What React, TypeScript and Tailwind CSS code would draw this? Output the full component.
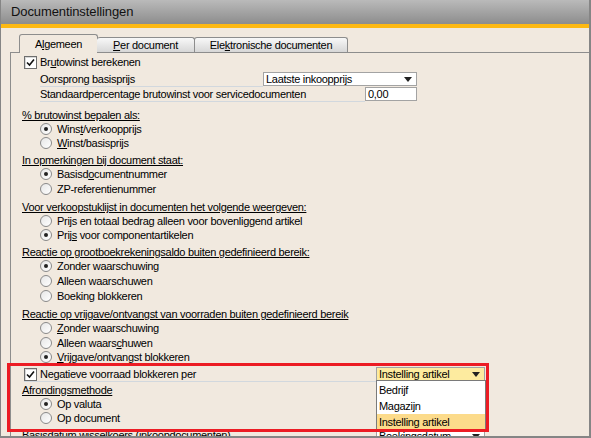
import React from "react";

const Check = () => (
  <svg width="9" height="9" viewBox="0 0 9 9">
    <path d="M1 4.5 L3.5 7 L8 1.5" stroke="#111" strokeWidth="1.6" fill="none" />
  </svg>
);

const CheckBox = ({ checked }: { checked?: boolean }) => (
  <div className="w-[13px] h-[13px] shrink-0 border border-[#6e6e6e] bg-white flex items-center justify-center shadow-[inset_1px_1px_0_#d8d8d8]">
    {checked && <Check />}
  </div>
);

const Radio = ({ checked }: { checked?: boolean }) => (
  <div className="w-[12px] h-[12px] shrink-0 rounded-full border border-[#8a8a8a] bg-gradient-to-br from-[#e6e6e6] to-white flex items-center justify-center">
    {checked && <div className="w-[4px] h-[4px] rounded-full bg-[#222]" />}
  </div>
);

const Arrow = () => (
  <svg width="8" height="5" viewBox="0 0 8 5" className="shrink-0">
    <polygon points="0,0 8,0 4,5" fill="#222" />
  </svg>
);

const Header = ({ children, cls }: { children: React.ReactNode; cls: string }) => (
  <div className={"h-[14px] leading-[14px] pl-[11px] " + cls}>
    <span className="underline underline-offset-[1px]">{children}</span>
  </div>
);

const RadioRow = ({
  children,
  checked,
  cls,
}: {
  children: React.ReactNode;
  checked?: boolean;
  cls: string;
}) => (
  <div className={"h-[14px] flex items-center pl-[29px] " + cls}>
    <Radio checked={checked} />
    <span className="ml-[5px] leading-[14px]">{children}</span>
  </div>
);

export default function App() {
  return (
    <div className="w-[591px] h-[438px] overflow-hidden relative bg-[#f1e9df] border-l border-r-2 border-b-2 border-[#858585] text-[11px] tracking-[-0.3px] text-black font-['Liberation_Sans',Arial,sans-serif]">
      {/* title bar */}
      <div className="h-[24px] bg-gradient-to-b from-[#bababa] to-[#8d8d8d] flex items-center pl-[10px]">
        <span className="text-[13px] tracking-[-0.1px] text-[#111]">Documentinstellingen</span>
      </div>
      <div className="h-[4px] bg-[#fdb913]" />

      {/* tab strip */}
      <div className="h-[24px] flex items-end pl-[18px] relative z-10">
        <div className="w-[79px] h-[19px] -mb-px bg-[#f1e9df] border-l border-t border-r border-[#8d8d8d] rounded-t-[3px] flex items-center justify-center">
          <span>
            A<span className="underline">l</span>gemeen
          </span>
        </div>
        <div className="w-[98px] h-[15px] -ml-px border-t border-r border-[#8d8d8d] rounded-t-[3px] bg-gradient-to-b from-[#f8f8f8] to-[#d7d7d7] flex items-center justify-center">
          <span>
            <span className="underline">P</span>er document
          </span>
        </div>
        <div className="w-[154px] h-[15px] -ml-px border-l border-t border-r border-[#8d8d8d] rounded-t-[3px] bg-gradient-to-b from-[#f8f8f8] to-[#d7d7d7] flex items-center justify-center">
          <span>
            Ele<span className="underline">k</span>tronische documenten
          </span>
        </div>
      </div>

      {/* panel */}
      <div className="ml-[9px] border-l border-t border-[#8d8d8d] h-[400px] flex flex-col">
        {/* row 1 */}
        <div className="h-[14px] mt-[2px] flex items-center pl-[13px]">
          <CheckBox checked />
          <span className="ml-[3px] leading-[14px]">
            Br<span className="underline">u</span>towinst berekenen
          </span>
        </div>
        {/* row 2 */}
        <div className="h-[15px] mt-[3px] flex pl-[29px]">
          <div className="w-[223px] border-b border-[#d2d8de] leading-[14px]">Oorsprong basisprijs</div>
          <div className="w-[154px] h-[14px] bg-white border border-[#a3a3a3] flex items-center justify-between pl-[2px] pr-[4px] leading-[12px]">
            <span>Laatste inkoopprijs</span>
            <Arrow />
          </div>
        </div>
        {/* row 3 */}
        <div className="h-[15px] flex pl-[29px]">
          <div className="w-[325px] border-b border-[#d2d8de] leading-[14px]">
            Standaardpercentage brutowinst voor servicedocumenten
          </div>
          <div className="w-[52px] h-[14px] bg-white border border-[#a3a3a3] flex items-center pl-[2px] leading-[12px]">
            0,00
          </div>
        </div>

        <Header cls="mt-[6px]">% brutowinst bepalen als:</Header>
        <RadioRow checked cls="">
          Wins<span className="underline">t</span>/verkoopprijs
        </RadioRow>
        <RadioRow cls="">
          <span className="underline">W</span>inst/basisprijs
        </RadioRow>

        <Header cls="mt-[3px]">In opmerkingen bij document staat:</Header>
        <RadioRow checked cls="">
          Basisd<span className="underline">o</span>cumentnummer
        </RadioRow>
        <RadioRow cls="mt-px">ZP-referentienummer</RadioRow>

        <Header cls="mt-[4px]">Voor verkoopstuklijst in documenten het volgende weergeven:</Header>
        <RadioRow cls="">Prijs en totaal bedrag alleen voor bovenliggend artikel</RadioRow>
        <RadioRow checked cls="">
          Prij<span className="underline">s</span> voor componentartikelen
        </RadioRow>

        <Header cls="mt-[3px]">Reactie op grootboekrekeningsaldo buiten gedefinieerd bereik:</Header>
        <RadioRow checked cls="">
          Zonder waarschuwing
        </RadioRow>
        <RadioRow cls="mt-px">Alleen waarschuwen</RadioRow>
        <RadioRow cls="mt-px">Boeking blokkeren</RadioRow>

        <Header cls="mt-[4px]">Reactie op vrijgave/ontvangst van voorraden buiten gedefinieerd bereik</Header>
        <RadioRow cls="">
          <span className="underline">Z</span>onder waarschuwing
        </RadioRow>
        <RadioRow cls="mt-px">
          Alleen waars<span className="underline">c</span>huwen
        </RadioRow>
        <RadioRow checked cls="">
          <span className="underline">V</span>rijgave/ontvangst blokkeren
        </RadioRow>

        {/* negatieve voorraad */}
        <div className="h-[15px] mt-[3px] flex pl-[13px]">
          <div className="w-[352px] border-b border-[#d2d8de] flex items-center">
            <CheckBox checked />
            <span className="ml-[3px] leading-[14px]">Negatieve voorraad blokkeren per</span>
          </div>
          <div className="w-[109px] h-[14px] bg-[#fdeb9f] border border-[#a3a3a3] flex items-center justify-between pl-[2px] pr-[4px] leading-[12px]">
            <span>Instelling artikel</span>
            <Arrow />
          </div>
        </div>

        <Header cls="mt-px">Afrondingsmethode</Header>
        <RadioRow checked cls="">
          Op valuta
        </RadioRow>
        <RadioRow cls="">Op document</RadioRow>

        <div className="h-[15px] mt-[3px] flex">
          <div className="w-[365px] pl-[11px] leading-[14px]">
            <span className="underline underline-offset-[1px]">Basisdatum wisselkoers (inkoopdocumenten)</span>
          </div>
          <div className="w-[109px] h-[14px] mt-px bg-white border border-[#a3a3a3] flex items-center justify-between pl-[2px] pr-[4px] leading-[12px]">
            <span>Boekingsdatum</span>
            <Arrow />
          </div>
        </div>
      </div>

      {/* open dropdown list */}
      <div className="absolute left-[375px] top-[380px] w-[110px] h-[51px] bg-white border border-[#7a7a7a] pt-px z-20">
        <div className="h-[16px] leading-[16px] pl-[2px]">Bedrijf</div>
        <div className="h-[16px] leading-[16px] pl-[2px]">Magazijn</div>
        <div className="h-[16px] leading-[16px] pl-[2px] bg-[#fcdb8b]">Instelling artikel</div>
      </div>

      {/* red annotation box */}
      <div className="absolute left-[6px] top-[363px] w-[482px] h-[69px] border-[3px] border-[#ec1c24] z-30 pointer-events-none" />
    </div>
  );
}
